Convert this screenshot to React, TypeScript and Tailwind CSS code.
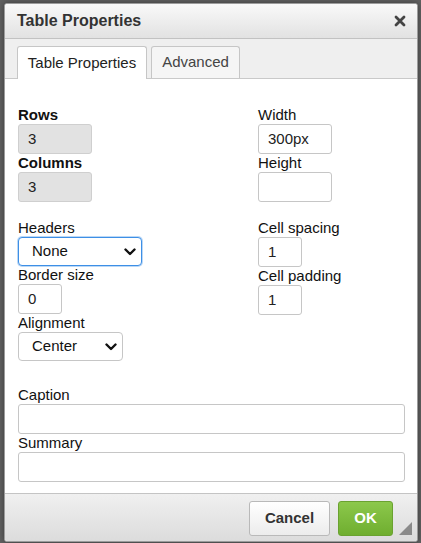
import React from "react";

const Label = ({ children, bold }: { children: React.ReactNode; bold?: boolean }) => (
  <div className={`h-[18px] leading-[18px] text-[15px] text-[#111] ${bold ? "font-bold" : ""}`}>{children}</div>
);

const Input = ({ value, w, disabled }: { value?: string; w: string; disabled?: boolean }) => (
  <div
    className={`${w} h-[30px] flex items-center pl-[9px] text-[15px] text-[#222] rounded-[3px] border ${
      disabled ? "bg-[#e2e2e2] border-[#cfcfcf]" : "bg-white border-[#c6c6c6]"
    }`}
  >
    {value}
  </div>
);

const Chevron = () => (
  <svg width="12" height="8" viewBox="0 0 12 8" className="shrink-0">
    <polyline points="1.5,1.5 6,6 10.5,1.5" fill="none" stroke="#111" strokeWidth="2.4" strokeLinecap="round" strokeLinejoin="round" />
  </svg>
);

const Select = ({ value, w, focused }: { value: string; w: string; focused?: boolean }) => (
  <div
    className={`${w} h-[29px] flex items-center justify-between pl-[13px] pr-[5px] text-[15px] text-[#111] bg-white rounded-[4px] border ${
      focused ? "border-[#3d8fe6] shadow-[0_0_0_1px_rgba(61,143,230,0.35)]" : "border-[#c6c6c6]"
    }`}
  >
    <span>{value}</span>
    <Chevron />
  </div>
);

export default function App() {
  return (
    <div
      className="w-[421px] h-[543px] bg-[#616161] pl-[4px] pt-[3px] overflow-hidden"
      style={{ fontFamily: '"Liberation Sans", Arial, sans-serif' }}
    >
      <div className="relative w-[414px] h-[539px] flex flex-col bg-white border border-[#9c9c9c] rounded-[3px] shadow-[0_0_6px_rgba(0,0,0,0.4)] overflow-hidden">
        {/* Title */}
        <div className="h-[35px] shrink-0 flex items-center justify-between pl-[12px] pr-[11px] bg-gradient-to-b from-[#f9f9f9] to-[#e2e2e2] border-b border-[#c2c2c2]">
          <span className="text-[16px] font-bold text-[#333]">Table Properties</span>
          <svg width="12" height="12" viewBox="0 0 12 12">
            <path d="M2 2 L10 10 M10 2 L2 10" stroke="#444" strokeWidth="2.8" strokeLinecap="round" />
          </svg>
        </div>
        {/* Tabs */}
        <div className="h-[40px] shrink-0 flex items-end gap-[4px] pl-[12px] bg-[#efefef] border-b border-[#c9c9c9]">
          <div className="w-[130px] h-[33px] -mb-px flex items-center justify-center bg-white border border-b-0 border-[#c6c6c6] rounded-t-[3px] text-[15px] text-[#222]">
            Table Properties
          </div>
          <div className="w-[89px] h-[32px] flex items-center justify-center bg-[#f5f5f5] border border-b-0 border-[#c6c6c6] rounded-t-[3px] text-[15px] text-[#444]">
            Advanced
          </div>
        </div>
        {/* Content */}
        <div className="flex-1 px-[13px] pt-[27px]">
          <div className="grid grid-cols-[240px_1fr]">
            <div className="flex flex-col">
              <Label bold>Rows</Label>
              <Input value="3" w="w-[74px]" disabled />
              <Label bold>Columns</Label>
              <Input value="3" w="w-[74px]" disabled />
              <div className="mt-[17px]">
                <Label>Headers</Label>
              </div>
              <Select value="None" w="w-[124px]" focused />
              <Label>Border size</Label>
              <Input value="0" w="w-[44px]" />
              <Label>Alignment</Label>
              <Select value="Center" w="w-[105px]" />
            </div>
            <div className="flex flex-col">
              <Label>Width</Label>
              <Input value="300px" w="w-[74px]" />
              <Label>Height</Label>
              <Input w="w-[74px]" />
              <div className="mt-[17px]">
                <Label>Cell spacing</Label>
              </div>
              <Input value="1" w="w-[44px]" />
              <Label>Cell padding</Label>
              <Input value="1" w="w-[44px]" />
            </div>
          </div>
          <div className="mt-[25px] flex flex-col">
            <Label>Caption</Label>
            <Input w="w-[387px]" />
            <Label>Summary</Label>
            <Input w="w-[387px]" />
          </div>
        </div>
        {/* Footer */}
        <div className="relative h-[48px] shrink-0 flex items-start justify-end gap-[8px] pt-[7px] pr-[24px] bg-gradient-to-b from-[#f0f0f0] to-[#dcdcdc] border-t border-[#c4c4c4]">
          <div className="w-[81px] h-[35px] flex items-center justify-center rounded-[3px] border border-[#b9b9b9] bg-gradient-to-b from-[#ffffff] to-[#ececec] text-[15px] font-bold text-[#333]">
            Cancel
          </div>
          <div className="w-[55px] h-[35px] flex items-center justify-center rounded-[3px] border border-[#6aa230] bg-gradient-to-b from-[#8cc84b] to-[#6fae2f] text-[15px] font-bold text-white">
            OK
          </div>
          <svg width="13" height="13" viewBox="0 0 13 13" className="absolute right-[5px] bottom-[6px]">
            <polygon points="13,0 13,13 0,13" fill="#8a8a8a" />
          </svg>
        </div>
      </div>
    </div>
  );
}
